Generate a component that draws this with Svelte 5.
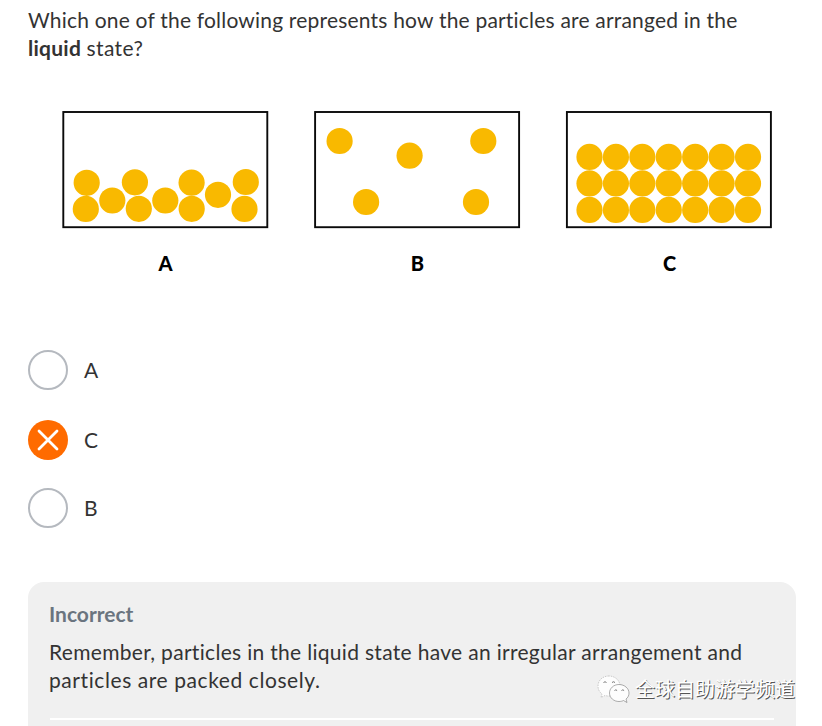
<script>
  const figures = [
    {
      label: 'A',
      origin: 26,
      left: 63.3,
      dots: [[86.7, 182.8], [85.8, 208.9], [112.3, 200.5], [134.9, 182.3], [138.8, 208.8], [165.3, 200.5], [191.6, 182.7], [191.7, 208.8], [218, 194.8], [245.8, 182], [244.5, 208.9]]
    },
    {
      label: 'B',
      origin: 278,
      left: 315.1,
      dots: [[339.6, 141], [409.6, 155.7], [483.3, 141], [366.1, 202], [476, 202]]
    },
    {
      label: 'C',
      origin: 530,
      left: 566.9,
      dots: [156.9, 183.4, 209.9].flatMap((y) => [0, 1, 2, 3, 4, 5, 6].map((i) => [589.5 + i * 26.42, y]))
    }
  ];
  const options = ['A', 'C', 'B'];
  let chosen = $state('C');
</script>

<main>
  <p class="question">
    <span class="q1">Which one of the following represents how the particles are arranged in the</span><br />
    <b>liquid</b> <span class="q2">state?</span>
  </p>

  <div class="figures">
    {#each figures as fig}
      <figure>
        <svg width="252" height="120" viewBox="{fig.origin} 110 252 120">
          <rect x={fig.left} y="112" width="204" height="115.2" fill="#fff" stroke="#0a0a0a" stroke-width="1.9" />
          {#each fig.dots as [x, y]}
            <circle cx={x} cy={y} r="13.1" fill="#f9b900" />
          {/each}
        </svg>
        <figcaption>{fig.label}</figcaption>
      </figure>
    {/each}
  </div>

  <div class="options">
    {#each options as option}
      <button class="option" onclick={() => (chosen = option)}>
        <span class="radio" class:wrong={chosen === option}>
          {#if chosen === option}
            <svg width="40" height="40" viewBox="0 0 40 40">
              <path d="M11 11L29 29M29 11L11 29" fill="none" stroke="#fff" stroke-width="2.8" stroke-linecap="round" />
            </svg>
          {/if}
        </span>
        <span>{option}</span>
      </button>
    {/each}
  </div>

  <section class="feedback">
    <h2>Incorrect</h2>
    <p>
      <span class="f1">Remember, particles in the liquid state have an irregular arrangement and</span><br />
      <span class="f2">particles are packed closely.</span>
    </p>
    <hr />
  </section>

  <div class="watermark">
    <svg width="34" height="30" viewBox="0 0 34 30">
      <g fill="#fdfdfd" stroke="#777" stroke-width="0.6">
        <path d="M12 1C5.500 1 1 5.500 1 11C1 14.500 2.500 17 5 19L4 22.500L8 20.500C15 22.500 23 19 23 11C23 5.500 18 1 12 1Z" stroke="#aaa" stroke-dasharray="1.500 1" />
        <path d="M22 9.500C16.500 9.500 12.500 13.500 12.500 18C12.500 23 17 26.500 22 26.500C24 26.500 25.500 26 26.500 25.500L30 27.500L29 24C31 22.500 32 20.500 32 18C32 13.500 27.500 9.500 22 9.500Z" />
      </g>
      <path d="M6.500 7.500q1.500-1.500 3 0M15 7.500q1.500-1.500 3 0M17.500 15.500q1.300-1.300 2.600 0M24.500 15.500q1.300-1.300 2.600 0" fill="none" stroke="#777" stroke-width="1" />
    </svg>
    <span>全球自助游学频道</span>
  </div>
</main>

<style>
  :global(body) {
    background: #fff;
  }
  main {
    position: relative;
    box-sizing: border-box;
    width: 822px;
    height: 726px;
    padding: 6px 26px 0 28px;
    overflow: hidden;
    display: flex;
    flex-direction: column;
    font-family: Lato, sans-serif;
    font-size: 21px;
    line-height: 28px;
    color: #333;
    background: #fff;
  }
  p {
    margin: 0;
    white-space: nowrap;
  }
  .q1 {
    letter-spacing: 0.2px;
  }
  .question b {
    letter-spacing: 0.25px;
  }
  .q2 {
    letter-spacing: 0.4px;
  }
  .f1 {
    letter-spacing: 0.31px;
  }
  .f2 {
    letter-spacing: 0.58px;
  }
  .figures {
    display: flex;
    margin: 48px 0 0 -2px;
  }
  figure {
    width: 252px;
    flex: none;
    margin: 0;
    display: flex;
    flex-direction: column;
  }
  figure svg {
    display: block;
  }
  figcaption {
    margin-top: 19px;
    padding-left: 27px;
    text-align: center;
    color: #000;
    font: 900 20px/28px Lato, sans-serif;
  }
  .options {
    display: flex;
    flex-direction: column;
    gap: 29px;
    margin-top: 73px;
  }
  .option {
    display: flex;
    align-items: center;
    gap: 16px;
    height: 40px;
    padding: 0;
    border: 0;
    background: none;
    font: inherit;
    color: inherit;
  }
  .option:nth-child(2) {
    margin: 1px 0 -1px;
  }
  .radio {
    box-sizing: border-box;
    width: 40px;
    height: 40px;
    border: 2px solid #b5b9bf;
    border-radius: 50%;
  }
  .radio.wrong {
    border: 0;
    background: #ff6b00;
  }
  .radio svg {
    display: block;
  }
  .feedback {
    box-sizing: border-box;
    height: 180px;
    flex: none;
    width: 768px;
    margin-top: 54px;
    padding: 18px 22px 0 21px;
    border-radius: 16px;
    background: #f0f0f0;
  }
  h2 {
    margin: 0 0 10px;
    font-size: 21px;
    line-height: 28px;
    font-weight: 700;
    color: #6a747f;
  }
  hr {
    height: 2px;
    margin: 24px 0 0 1px;
    border: 0;
    background: #fff;
  }
  .watermark {
    position: absolute;
    left: 597px;
    top: 675px;
    display: flex;
    align-items: center;
    gap: 4px;
    font-family: "Noto Sans CJK SC", sans-serif;
    font-size: 20px;
    line-height: 30px;
    white-space: nowrap;
    color: #fff;
    text-shadow: 1px 1px 0 #555;
  }
  .watermark span {
    margin-top: -2px;
  }
</style>
